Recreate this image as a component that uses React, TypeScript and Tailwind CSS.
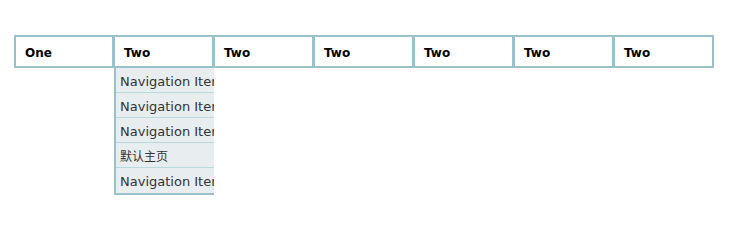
import React from "react";

const tabs = ["One", "Two", "Two", "Two", "Two", "Two", "Two"];
const items = [
  "Navigation Item",
  "Navigation Item",
  "Navigation Item",
  "默认主页",
  "Navigation Item",
];

export default function App() {
  return (
    <div
      className="w-[729px] h-[228px] bg-white pt-[35px] pl-[14px]"
      style={{ fontFamily: '"DejaVu Sans", Verdana, "Noto Sans CJK SC", sans-serif' }}
    >
      <div className="flex">
        {tabs.map((t, i) => (
          <div
            key={i}
            className={`relative w-[100px] h-[33px] border-y-2 border-r-2 border-[#99c1cc] bg-white flex items-center pl-[9px] pt-[2px] text-[12px] font-bold text-black ${
              i === 0 ? "border-l-2" : "border-l"
            }`}
          >
            {t}
            {i === 1 && (
              <div className="absolute left-[-1px] top-[31px] w-[100px] border-l-2 border-b-2 border-[#99c1cc] bg-[#e8eef0] overflow-hidden z-10">
                {items.map((it, j) => (
                  <div
                    key={j}
                    className={`h-[25px] flex items-center pl-[4px] pt-[3px] whitespace-nowrap font-normal text-[#333333] ${
                      j === 3 ? "text-[12px]" : "text-[13px]"
                    } ${j < items.length - 1 ? "border-b border-[#b9d9e0]" : ""}`}
                  >
                    {it}
                  </div>
                ))}
              </div>
            )}
          </div>
        ))}
      </div>
    </div>
  );
}
